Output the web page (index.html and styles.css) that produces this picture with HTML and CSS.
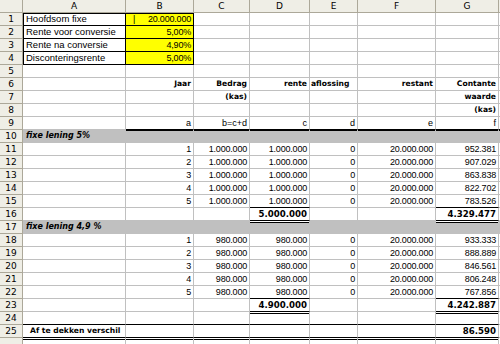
FILE: index.html
```html
<!DOCTYPE html>
<html>
<head>
<meta charset="utf-8">
<link rel="stylesheet" href="styles.css">
</head>
<body>
<table class="sheet">
  <colgroup>
    <col class="w-rh"><col class="w-a"><col class="w-b"><col class="w-c"><col class="w-d"><col class="w-e"><col class="w-f"><col class="w-g"><col class="w-h">
  </colgroup>
  <thead>
    <tr><th class="corner"></th><th>A</th><th>B</th><th>C</th><th>D</th><th>E</th><th>F</th><th>G</th><th></th></tr>
  </thead>
  <tbody>
    <tr><th>1</th><td class="txt box top">Hoofdsom fixe</td><td class="num yel top"><span class="mark">|</span>20.000.000</td><td></td><td></td><td></td><td></td><td></td><td></td></tr>
    <tr><th>2</th><td class="txt box">Rente voor conversie</td><td class="num yel">5,00%</td><td></td><td></td><td></td><td></td><td></td><td></td></tr>
    <tr><th>3</th><td class="txt box">Rente na conversie</td><td class="num yel">4,90%</td><td></td><td></td><td></td><td></td><td></td><td></td></tr>
    <tr><th>4</th><td class="txt box">Disconteringsrente</td><td class="num yel">5,00%</td><td></td><td></td><td></td><td></td><td></td><td></td></tr>
    <tr><th>5</th><td></td><td></td><td></td><td></td><td></td><td></td><td></td><td></td></tr>
    <tr><th>6</th><td></td><td class="hd">Jaar</td><td class="hd">Bedrag</td><td class="hd">rente</td><td class="hd left">aflossing</td><td class="hd">restant</td><td class="hd">Contante</td><td></td></tr>
    <tr><th>7</th><td></td><td></td><td class="hd">(kas)</td><td></td><td></td><td></td><td class="hd">waarde</td><td></td></tr>
    <tr><th>8</th><td></td><td></td><td></td><td></td><td></td><td></td><td class="hd">(kas)</td><td></td></tr>
    <tr><th>9</th><td></td><td class="lbl bb">a</td><td class="lbl bb">b=c+d</td><td class="lbl bb">c</td><td class="lbl bb">d</td><td class="lbl bb">e</td><td class="lbl bb">f</td><td class="bb"></td></tr>
    <tr class="band"><th>10</th><td class="sec">fixe lening 5%</td><td class="thick"></td><td class="thick"></td><td class="thick"></td><td class="thick"></td><td class="thick"></td><td class="thick"></td><td class="thick"></td></tr>
    <tr><th>11</th><td></td><td class="num">1</td><td class="num">1.000.000</td><td class="num">1.000.000</td><td class="num">0</td><td class="num">20.000.000</td><td class="num">952.381</td><td></td></tr>
    <tr><th>12</th><td></td><td class="num">2</td><td class="num">1.000.000</td><td class="num">1.000.000</td><td class="num">0</td><td class="num">20.000.000</td><td class="num">907.029</td><td></td></tr>
    <tr><th>13</th><td></td><td class="num">3</td><td class="num">1.000.000</td><td class="num">1.000.000</td><td class="num">0</td><td class="num">20.000.000</td><td class="num">863.838</td><td></td></tr>
    <tr><th>14</th><td></td><td class="num">4</td><td class="num">1.000.000</td><td class="num">1.000.000</td><td class="num">0</td><td class="num">20.000.000</td><td class="num">822.702</td><td></td></tr>
    <tr><th>15</th><td></td><td class="num">5</td><td class="num">1.000.000</td><td class="num bb">1.000.000</td><td class="num">0</td><td class="num">20.000.000</td><td class="num bb">783.526</td><td></td></tr>
    <tr><th>16</th><td></td><td></td><td></td><td class="tot bb">5.000.000</td><td></td><td></td><td class="tot bb">4.329.477</td><td></td></tr>
    <tr class="band"><th>17</th><td class="sec">fixe lening 4,9 %</td><td></td><td></td><td class="dbl"></td><td></td><td></td><td class="dbl"></td><td></td></tr>
    <tr><th>18</th><td></td><td class="num">1</td><td class="num">980.000</td><td class="num">980.000</td><td class="num">0</td><td class="num">20.000.000</td><td class="num">933.333</td><td></td></tr>
    <tr><th>19</th><td></td><td class="num">2</td><td class="num">980.000</td><td class="num">980.000</td><td class="num">0</td><td class="num">20.000.000</td><td class="num">888.889</td><td></td></tr>
    <tr><th>20</th><td></td><td class="num">3</td><td class="num">980.000</td><td class="num">980.000</td><td class="num">0</td><td class="num">20.000.000</td><td class="num">846.561</td><td></td></tr>
    <tr><th>21</th><td></td><td class="num">4</td><td class="num">980.000</td><td class="num">980.000</td><td class="num">0</td><td class="num">20.000.000</td><td class="num">806.248</td><td></td></tr>
    <tr><th>22</th><td></td><td class="num">5</td><td class="num">980.000</td><td class="num bb">980.000</td><td class="num">0</td><td class="num">20.000.000</td><td class="num bb">767.856</td><td></td></tr>
    <tr><th>23</th><td></td><td></td><td></td><td class="tot bb">4.900.000</td><td></td><td></td><td class="tot bb">4.242.887</td><td></td></tr>
    <tr><th>24</th><td class="bb"></td><td class="bb"></td><td class="bb"></td><td class="dbl bb"></td><td class="bb"></td><td class="bb"></td><td class="dbl bb"></td><td></td></tr>
    <tr><th>25</th><td class="hd left bb">Af te dekken verschil</td><td class="bb"></td><td class="bb"></td><td class="bb"></td><td class="bb"></td><td class="bb"></td><td class="tot bb">86.590</td><td></td></tr>
    <tr><th></th><td class="dbl"></td><td class="dbl"></td><td class="dbl"></td><td class="dbl"></td><td class="dbl"></td><td class="dbl"></td><td class="dbl"></td><td></td></tr>
  </tbody>
</table>
</body>
</html>
```

FILE: styles.css
```css
html, body {
  margin: 0;
  padding: 0;
  overflow: hidden;
  background: #ffffff;
}

.sheet {
  table-layout: fixed;
  border-collapse: separate;
  border-spacing: 0;
  width: 519px;
  font-family: "Liberation Sans", Arial, sans-serif;
  font-size: 9.5px;
  color: #000;
}

.w-rh { width: 23px; }
.w-a { width: 103px; }
.w-b { width: 68px; }
.w-c { width: 56px; }
.w-d { width: 60px; }
.w-e { width: 48px; }
.w-f { width: 78px; }
.w-g { width: 63px; }
.w-h { width: 20px; }

.sheet tr { height: 13px; }

.sheet td {
  box-sizing: border-box;
  height: 13px;
  padding: 0 2px 0 2px;
  line-height: 12px;
  border-right: 1px solid #c0c0c0;
  border-bottom: 1px solid #c0c0c0;
  white-space: nowrap;
  overflow: visible;
  text-align: right;
  vertical-align: bottom;
}

.sheet th {
  box-sizing: border-box;
  height: 13px;
  padding: 0;
  background: #efeee6;
  border-right: 1px solid #aca899;
  border-bottom: 1px solid #aca899;
  font-family: "DejaVu Sans", Tahoma, sans-serif;
  font-size: 9px;
  font-weight: normal;
  line-height: 12px;
  text-align: center;
  color: #000;
}

.sheet td.txt {
  text-align: left;
  padding-left: 3px;
}

.num {
  font-size: 9px;
  letter-spacing: -0.2px;
}

.lbl {
  font-size: 9px;
}

.hd {
  font-family: "DejaVu Sans", sans-serif;
  font-weight: bold;
  font-size: 7.6px;
}

.sheet td.left {
  text-align: left;
  padding-left: 1px;
}

.sheet td.hd.left.bb {
  padding-left: 7px;
}

.tot {
  font-family: "DejaVu Sans", sans-serif;
  font-weight: bold;
  font-size: 8.6px;
}

.sec {
  font-family: "DejaVu Sans", sans-serif;
  font-weight: bold;
  font-style: italic;
  font-size: 8px;
}

.sheet td.sec {
  text-align: left;
  padding-left: 3px;
}

/* black-bordered input block */
.sheet td.box {
  border-right-color: #000;
  border-bottom-color: #000;
  box-shadow: inset 1px 0 0 #000;
}

.sheet td.box.top {
  box-shadow: inset 1px 1px 0 #000;
}

.sheet td.yel {
  background: #ffff00;
  border-right-color: #000;
  border-bottom-color: #000;
  text-align: right;
}

.sheet td.yel.top {
  box-shadow: inset 0 1px 0 #000;
}

.mark {
  float: left;
  padding-left: 5px;
}

.sheet td.bb {
  border-bottom-color: #000;
}

/* grey section bands */
.band td {
  background: #c0c0c0;
  border-right-color: #c0c0c0;
  border-bottom-color: #c0c0c0;
}

.sheet .band td.thick {
  box-shadow: inset 0 1px 0 #000;
}

/* second line of a double underline */
.sheet td.dbl {
  box-shadow: inset 0 1px 0 #ffffff, inset 0 2px 0 #000;
}
```
